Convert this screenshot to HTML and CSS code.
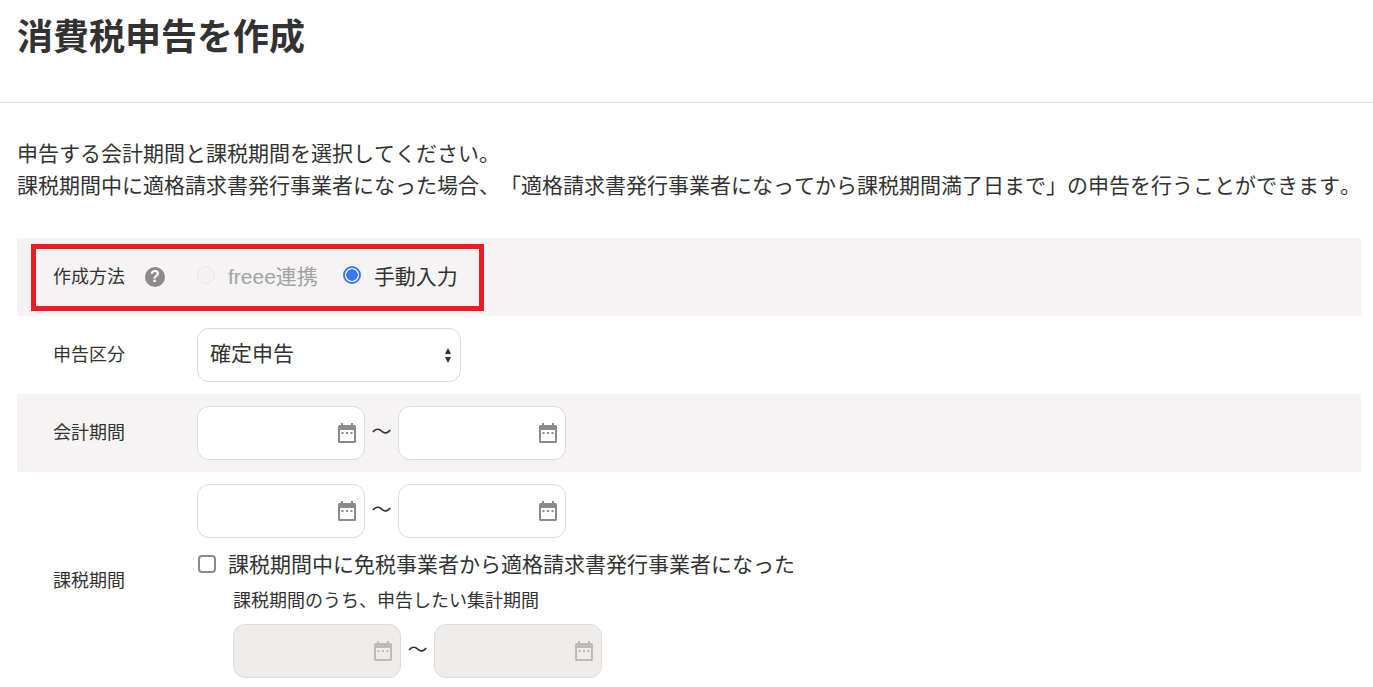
FILE: index.html
```html
<!DOCTYPE html>
<html lang="ja">
<head>
<meta charset="utf-8">
<title>消費税申告を作成</title>
<link rel="stylesheet" href="styles.css">
</head>
<body>
<svg class="sprite" width="0" height="0" aria-hidden="true">
  <symbol id="cal" viewBox="0 0 18 20">
    <path fill-rule="evenodd" d="M3 0h2v2h8V0h2v2h1.500A1.500 1.500 0 0 1 18 3.500v15a1.500 1.500 0 0 1-1.500 1.500h-15A1.500 1.500 0 0 1 0 18.500v-15A1.500 1.500 0 0 1 1.500 2H3zM2 7v11h14V7z"/>
    <path d="M3.500 9h2v2h-2zM8 9h2v2H8zM12.500 9h2v2h-2z"/>
  </symbol>
</svg>
<header class="page-header"><h1 class="title">消費税申告を作成</h1></header>
<main class="content">
  <p class="intro">申告する会計期間と課税期間を選択してください。<br>課税期間中に適格請求書発行事業者になった場合、「適格請求書発行事業者になってから課税期間満了日まで」の申告を行うことができます。</p>
  <div class="form">
    <div class="row shaded">
      <div class="label">作成方法<span class="help">?</span></div>
      <div class="field radios">
        <label class="choice off"><input class="radio" type="radio" name="m" disabled><span class="choice-text">freee連携</span></label>
        <label class="choice"><input class="radio" type="radio" name="m" checked><span class="choice-text">手動入力</span></label>
      </div>
      <div class="highlight"></div>
    </div>
    <div class="row">
      <div class="label">申告区分</div>
      <div class="field">
        <div class="select-wrap">
          <select class="select"><option>確定申告</option></select>
          <span class="arrows"><i class="up"></i><i class="down"></i></span>
        </div>
      </div>
    </div>
    <div class="row shaded">
      <div class="label">会計期間</div>
      <div class="field">
        <div class="range">
          <span class="date"><input class="date-input" type="text"><svg class="cal"><use href="#cal"/></svg></span>
          <span class="tilde">～</span>
          <span class="date"><input class="date-input" type="text"><svg class="cal"><use href="#cal"/></svg></span>
        </div>
      </div>
    </div>
    <div class="row">
      <div class="label">課税期間</div>
      <div class="field">
        <div class="range">
          <span class="date"><input class="date-input" type="text"><svg class="cal"><use href="#cal"/></svg></span>
          <span class="tilde">～</span>
          <span class="date"><input class="date-input" type="text"><svg class="cal"><use href="#cal"/></svg></span>
        </div>
        <label class="check"><input class="checkbox" type="checkbox">課税期間中に免税事業者から適格請求書発行事業者になった</label>
        <div class="sub">
          <div class="sub-label">課税期間のうち、申告したい集計期間</div>
          <div class="range">
            <span class="date disabled"><input class="date-input" type="text" disabled><svg class="cal"><use href="#cal"/></svg></span>
            <span class="tilde">～</span>
            <span class="date disabled"><input class="date-input" type="text" disabled><svg class="cal"><use href="#cal"/></svg></span>
          </div>
        </div>
      </div>
    </div>
  </div>
</main>
</body>
</html>
```
FILE: styles.css
```css
* { box-sizing: border-box; }
html, body { height: 100%; overflow: hidden; }
body {
  margin: 0;
  background: #fff;
  color: #323232;
  font-family: "Liberation Sans", "Noto Sans CJK JP", sans-serif;
  text-spacing-trim: space-all;
  font-kerning: none;
}
.sprite { position: absolute; }
.page-header {
  height: 103px;
  padding: 16px 17px 0;
  border-bottom: 1px solid #e6e6e6;
}
.title {
  margin: 0;
  font-size: 36px;
  line-height: 44px;
  font-weight: 700;
}
.content { padding: 35px 12px 0 17px; }
.intro {
  margin: 0 0 36px;
  font-size: 21px;
  line-height: 32px;
}
.row {
  position: relative;
  display: flex;
  align-items: center;
  padding: 12px 0;
}
.shaded { background: #f5f3f4; }
.label {
  flex: 0 0 180px;
  padding: 0 0 4px 36px;
  display: flex;
  align-items: center;
  font-size: 18px;
}
.help {
  width: 20px;
  height: 20px;
  margin: 4px 0 0 20px;
  border-radius: 50%;
  background: #8c8a88;
  color: #fff;
  font-size: 16px;
  font-weight: 700;
  line-height: 20px;
  text-align: center;
}
.field { display: flex; flex-direction: column; }
.radios {
  flex-direction: row;
  align-items: center;
  height: 54px;
  gap: 25px;
}
.choice {
  display: flex;
  align-items: center;
  font-size: 21px;
  color: #323232;
}
.choice-text { padding-bottom: 4px; }
.choice.off { color: #a3a3a3; }
.radio {
  appearance: none;
  width: 18px;
  height: 18px;
  margin: -4px 13px 0 0;
  border-radius: 50%;
  border: 1px solid #c4c4c4;
  background: #fff;
}
.radio:disabled { border-color: #e6e6e6; background: #f3f1f2; }
.radio:checked {
  border: 2px solid #3a77f6;
  background: radial-gradient(circle, #3a77f6 0 5.500px, #fff 6px);
}
.highlight {
  position: absolute;
  left: 14px;
  top: 6px;
  width: 453px;
  height: 67px;
  border: 5px solid #ed1c24;
  pointer-events: none;
}
.select-wrap { position: relative; width: 264px; height: 54px; }
.select {
  appearance: none;
  width: 100%;
  height: 100%;
  padding: 0 12px 4px;
  border: 1px solid #d9d9d9;
  border-radius: 12px;
  background: #fff;
  color: #323232;
  font: inherit;
  font-size: 21px;
}
.arrows {
  position: absolute;
  right: 10px;
  top: 20px;
  display: flex;
  flex-direction: column;
  gap: 3px;
}
.up, .down {
  width: 0;
  height: 0;
  border-left: 3.500px solid transparent;
  border-right: 3.500px solid transparent;
}
.up { border-bottom: 6px solid #323232; }
.down { border-top: 6px solid #323232; }
.range { display: flex; align-items: center; }
.date { position: relative; display: block; width: 168px; height: 54px; }
.date-input {
  width: 100%;
  height: 100%;
  padding: 0 12px;
  border: 1px solid #dcdcdc;
  border-radius: 12px;
  background: #fff;
}
.cal {
  position: absolute;
  right: 9px;
  top: 17px;
  width: 18px;
  height: 20px;
  fill: #8c8a88;
}
.tilde {
  width: 33px;
  font-size: 20px;
  line-height: 53px;
  height: 54px;
  text-align: center;
}
.date.disabled .date-input { background: #eeedec; }
.date.disabled .cal { fill: #bdbcba; }
.check {
  display: flex;
  align-items: center;
  margin-top: 11px;
  font-size: 21px;
  line-height: 32px;
}
.checkbox {
  appearance: none;
  width: 18px;
  height: 18px;
  margin: -2px 12px 0 1px;
  border: 2px solid #8c8a88;
  border-radius: 4px;
  background: #fff;
}
.sub { padding-left: 36px; margin-top: 7px; }
.sub-label { font-size: 18px; line-height: 26px; margin-bottom: 10px; }
```
